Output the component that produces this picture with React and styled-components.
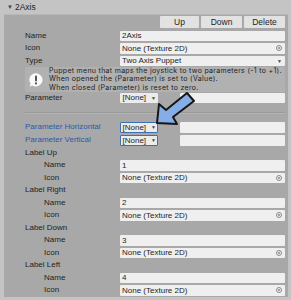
import React from 'react';
import styled, {createGlobalStyle} from 'styled-components';

const GlobalStyle = createGlobalStyle`
    html, body {
        margin: 0;
        padding: 0;
        background: #c4c4c4;
    }
    body {
        font-family: "Liberation Sans", Arial, sans-serif;
        font-size: 8px;
        color: #1e1e1e;
    }
`;

const Root = styled.div`
    position: relative;
    width: 291px;
    height: 300px;
    background: #c4c4c4;
    overflow: hidden;
`;

const Header = styled.div`
    height: 14px;
    display: flex;
    align-items: center;
    padding-left: 7px;
    gap: 2px;
    font-size: 8.5px;
    color: #1e1e1e;
`;

const Caret = styled.span`
    font-size: 6px;
    color: #444;
`;

const Panel = styled.div`
    margin: 0 3px 0 4px;
    height: 283px;
    background: #a8a8a8;
    border-top: 1px solid #b8b8b8;
    padding: 1px 3px 0 21px;
    box-sizing: border-box;
`;

const Toolbar = styled.div`
    display: flex;
    justify-content: flex-end;
    gap: 2px;
    height: 12px;
    margin-bottom: 2.5px;
`;

const Button = styled.button`
    width: ${p => p.$w}px;
    height: 12px;
    padding: 0;
    border: none;
    border-radius: 1px;
    background: #e2e2e2;
    font-family: inherit;
    font-size: 8.5px;
    color: #222;
`;

const Row = styled.div`
    display: flex;
    align-items: center;
    height: 10.5px;
    margin-bottom: ${p => p.$gap ?? 2}px;
`;

const Label = styled.div`
    flex: none;
    width: 95px;
    box-sizing: border-box;
    padding-left: ${p => (p.$indent ? 19 : 0)}px;
    color: ${p => (p.$blue ? '#2a5aa8' : '#1e1e1e')};
    white-space: nowrap;
    line-height: 10.5px;
`;

const Field = styled.div`
    flex: 1;
    min-width: 0;
    height: 10.5px;
    background: #efefef;
    border-radius: 1px;
    display: flex;
    align-items: center;
    justify-content: space-between;
    padding: 0 3px 0 2px;
    box-sizing: border-box;
    color: #1e1e1e;
    white-space: nowrap;
`;

const PickIcon = styled.span`
    width: 6px;
    height: 6px;
    border: 1px solid #8a8a8a;
    border-radius: 50%;
    box-sizing: border-box;
    display: flex;
    align-items: center;
    justify-content: center;
    &::after {
        content: '';
        width: 2px;
        height: 2px;
        border-radius: 50%;
        background: #8a8a8a;
    }
`;

const Arrow = styled.span`
    font-size: 5px;
    color: #444;
`;

const ParamLine = styled.div`
    flex: 1;
    min-width: 0;
    display: flex;
    align-items: center;
    gap: 22px;
`;

const Popup = styled.div`
    width: 38px;
    height: 10.5px;
    box-sizing: border-box;
    background: #ececec;
    border: 1px solid ${p => (p.$blue ? '#3d6fb8' : 'transparent')};
    border-radius: 1px;
    display: flex;
    align-items: center;
    gap: 5px;
    padding: 0 0 0 1.5px;
    flex: none;
`;

const TextBox = styled.div`
    flex: 1;
    height: 10.5px;
    background: #efefef;
    border-radius: 1px;
`;

const HelpBox = styled.div`
    display: flex;
    align-items: center;
    gap: 5px;
    height: 25px;
    background: #b1b1b1;
    border-radius: 1px;
    padding-left: 3px;
    margin-bottom: 0.5px;
`;

const HelpText = styled.div`
    font-family: Inter, "Liberation Sans", Arial, sans-serif;
    font-size: 7px;
    line-height: 8.2px;
    letter-spacing: 0.3px;
    color: #1e1e1e;
    white-space: nowrap;
`;

const Separator = styled.div`
    height: 1px;
    background: #9a9a9a;
    border-bottom: 1px solid #b4b4b4;
    margin: 9px 0 8px 0;
`;

const Overlay = styled.svg`
    position: absolute;
    left: 0;
    top: 0;
    pointer-events: none;
`;

const HelpIcon = () => (
    <svg width="16" height="16" viewBox="0 0 16 16">
        <path d="M8 1.2a6.6 6.6 0 1 1 -3.6 12.2 L1.6 14.6 L2.6 11.6 A6.6 6.6 0 0 1 8 1.2z" fill="#fafafa"/>
        <rect x="7" y="3.6" width="2" height="5.8" rx="0.8" fill="#555"/>
        <circle cx="8" cy="11.4" r="1.1" fill="#555"/>
    </svg>
);

const ObjectField = ({label, indent}) => (
    <Row>
        <Label $indent={indent}>{label}</Label>
        <Field>None (Texture 2D)<PickIcon/></Field>
    </Row>
);

const TextField = ({label, value, indent}) => (
    <Row>
        <Label $indent={indent}>{label}</Label>
        <Field>{value}</Field>
    </Row>
);

const ParamRow = ({label, blue, gap}) => (
    <Row $gap={gap}>
        <Label $blue={blue}>{label}</Label>
        <ParamLine>
            <Popup $blue={blue}>[None]<Arrow>▼</Arrow></Popup>
            <TextBox/>
        </ParamLine>
    </Row>
);

const labels = [
    {title: 'Label Up', name: '1'},
    {title: 'Label Right', name: '2'},
    {title: 'Label Down', name: '3'},
    {title: 'Label Left', name: '4'},
];

export default function App() {
    return (
        <Root>
            <GlobalStyle/>
            <Header><Caret>▼</Caret>2Axis</Header>
            <Panel>
                <Toolbar>
                    <Button $w={39}>Up</Button>
                    <Button $w={41}>Down</Button>
                    <Button $w={41}>Delete</Button>
                </Toolbar>
                <TextField label="Name" value="2Axis"/>
                <ObjectField label="Icon"/>
                <Row $gap={1}>
                    <Label>Type</Label>
                    <Field>Two Axis Puppet<Arrow>▼</Arrow></Field>
                </Row>
                <HelpBox>
                    <HelpIcon/>
                    <HelpText>
                        Puppet menu that maps the joystick to two parameters (-1 to +1).<br/>
                        When opened the (Parameter) is set to (Value).<br/>
                        When closed (Parameter) is reset to zero.
                    </HelpText>
                </HelpBox>
                <ParamRow label="Parameter" gap={0}/>
                <Separator/>
                <ParamRow label="Parameter Horizontal" blue gap={2.5}/>
                <ParamRow label="Parameter Vertical" blue gap={2}/>
                {labels.map(l => (
                    <React.Fragment key={l.title}>
                        <Row><Label>{l.title}</Label></Row>
                        <TextField label="Name" value={l.name} indent/>
                        <ObjectField label="Icon" indent/>
                    </React.Fragment>
                ))}
            </Panel>
            <Overlay width="291" height="300">
                <polygon
                    points="157,123 159,104 166,110 187,93 194,101 173,117 177,124"
                    fill="#86aee6"
                    stroke="#161616"
                    strokeWidth="2"
                    strokeLinejoin="round"
                />
            </Overlay>
        </Root>
    );
}
